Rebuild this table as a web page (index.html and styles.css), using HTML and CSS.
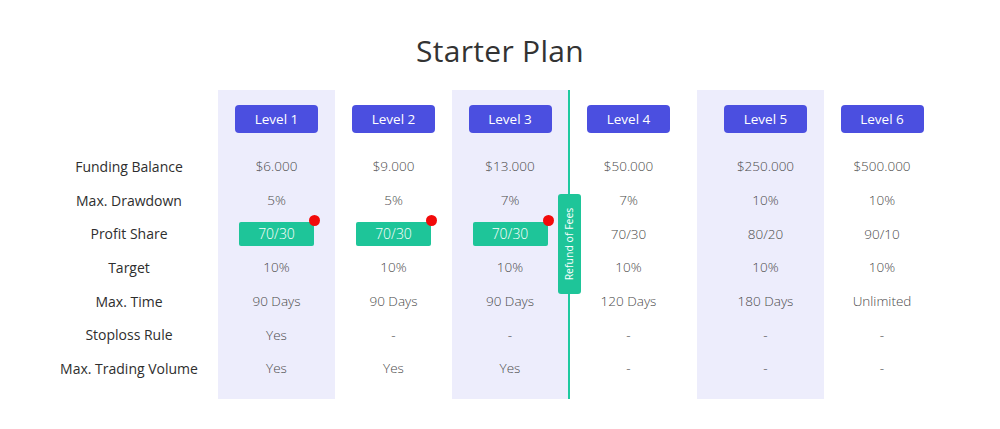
FILE: index.html
```html
<!DOCTYPE html>
<html lang="en">
<head>
<meta charset="utf-8">
<title>Starter Plan</title>
<link rel="stylesheet" href="styles.css">
</head>
<body>
<main class="page">
  <h1 class="title">Starter Plan</h1>
  <div class="table">
    <div class="col col-labels">
      <div class="head"></div>
      <div class="cell label">Funding Balance</div>
      <div class="cell label">Max. Drawdown</div>
      <div class="cell label">Profit Share</div>
      <div class="cell label">Target</div>
      <div class="cell label">Max. Time</div>
      <div class="cell label">Stoploss Rule</div>
      <div class="cell label">Max. Trading Volume</div>
    </div>
    <div class="col shaded">
      <div class="head"><span class="btn">Level 1</span></div>
      <div class="cell">$6.000</div>
      <div class="cell">5%</div>
      <div class="cell"><span class="pill">70/30<i class="dot"></i></span></div>
      <div class="cell">10%</div>
      <div class="cell">90 Days</div>
      <div class="cell">Yes</div>
      <div class="cell">Yes</div>
    </div>
    <div class="col">
      <div class="head"><span class="btn">Level 2</span></div>
      <div class="cell">$9.000</div>
      <div class="cell">5%</div>
      <div class="cell"><span class="pill">70/30<i class="dot"></i></span></div>
      <div class="cell">10%</div>
      <div class="cell">90 Days</div>
      <div class="cell">-</div>
      <div class="cell">Yes</div>
    </div>
    <div class="col shaded col-3">
      <div class="head"><span class="btn">Level 3</span></div>
      <div class="cell">$13.000</div>
      <div class="cell">7%</div>
      <div class="cell"><span class="pill">70/30<i class="dot"></i></span></div>
      <div class="cell">10%</div>
      <div class="cell">90 Days</div>
      <div class="cell">-</div>
      <div class="cell">Yes</div>
    </div>
    <div class="col col-4">
      <span class="refund"><span class="refund-text">Refund of Fees</span></span>
      <div class="head"><span class="btn">Level 4</span></div>
      <div class="cell">$50.000</div>
      <div class="cell">7%</div>
      <div class="cell">70/30</div>
      <div class="cell">10%</div>
      <div class="cell">120 Days</div>
      <div class="cell">-</div>
      <div class="cell">-</div>
    </div>
    <div class="col shaded col-5">
      <div class="head"><span class="btn">Level 5</span></div>
      <div class="cell">$250.000</div>
      <div class="cell">10%</div>
      <div class="cell">80/20</div>
      <div class="cell">10%</div>
      <div class="cell">180 Days</div>
      <div class="cell">-</div>
      <div class="cell">-</div>
    </div>
    <div class="col col-6">
      <div class="head"><span class="btn">Level 6</span></div>
      <div class="cell">$500.000</div>
      <div class="cell">10%</div>
      <div class="cell">90/10</div>
      <div class="cell">10%</div>
      <div class="cell">Unlimited</div>
      <div class="cell">-</div>
      <div class="cell">-</div>
    </div>
  </div>
</main>
</body>
</html>
```
FILE: styles.css
```css
* { box-sizing: border-box; }
html, body { margin: 0; padding: 0; background: #ffffff; }
body {
  font-family: "Open Sans", "Noto Sans", "Liberation Sans", sans-serif;
  color: #333333;
  width: 1000px;
  height: 429px;
  overflow: hidden;
}
.page { padding-top: 30px; }
.title {
  margin: 0;
  height: 42px;
  line-height: 42px;
  text-align: center;
  font-size: 30px;
  font-weight: 500;
  color: #333333;
  letter-spacing: 0.3px;
}
.table {
  display: flex;
  margin-top: 18px;
  padding-left: 40px;
}
.col {
  width: 117px;
  display: flex;
  flex-direction: column;
  padding-bottom: 14px;
}
.col-labels { width: 178px; }
.col-3 {
  width: 118px;
  border-right: 2px solid #1fcaa0;
}
.col-4 {
  width: 127px;
  padding-right: 10px;
  position: relative;
}
.col-5 { width: 127px; padding-left: 10px; }
.col-6 { width: 116px; }
.shaded { background: #ededfc; }
.head {
  height: 59px;
  padding-top: 15px;
  display: flex;
  justify-content: center;
}
.btn {
  display: flex;
  align-items: center;
  justify-content: center;
  width: 83px;
  height: 28px;
  background: #4b4fe0;
  color: #ffffff;
  border-radius: 4px;
  font-size: 13.5px;
  font-weight: 500;
}
.cell {
  height: 33.7px;
  display: flex;
  align-items: center;
  justify-content: center;
  font-size: 13.5px;
  font-weight: 300;
  color: #4a4a4a;
  white-space: nowrap;
  padding-top: 1px;
}
.label {
  font-size: 14px;
  font-weight: 500;
  color: #2e2e2e;
}
.pill {
  position: relative;
  display: flex;
  align-items: center;
  justify-content: center;
  width: 75px;
  height: 24px;
  background: #1ec599;
  color: #ffffff;
  border-radius: 2px;
  font-size: 14px;
  font-weight: 300;
}
.dot {
  position: absolute;
  right: -6px;
  top: -7px;
  width: 11px;
  height: 11px;
  border-radius: 50%;
  background: #f20a0a;
}
.refund {
  position: absolute;
  left: -12px;
  top: 104px;
  width: 23px;
  height: 100px;
  background: #1ec599;
  border-radius: 3px;
  display: flex;
  align-items: center;
  justify-content: center;
}
.refund-text {
  transform: rotate(-90deg);
  white-space: nowrap;
  color: #ffffff;
  font-size: 10.5px;
  font-weight: 400;
}
```
